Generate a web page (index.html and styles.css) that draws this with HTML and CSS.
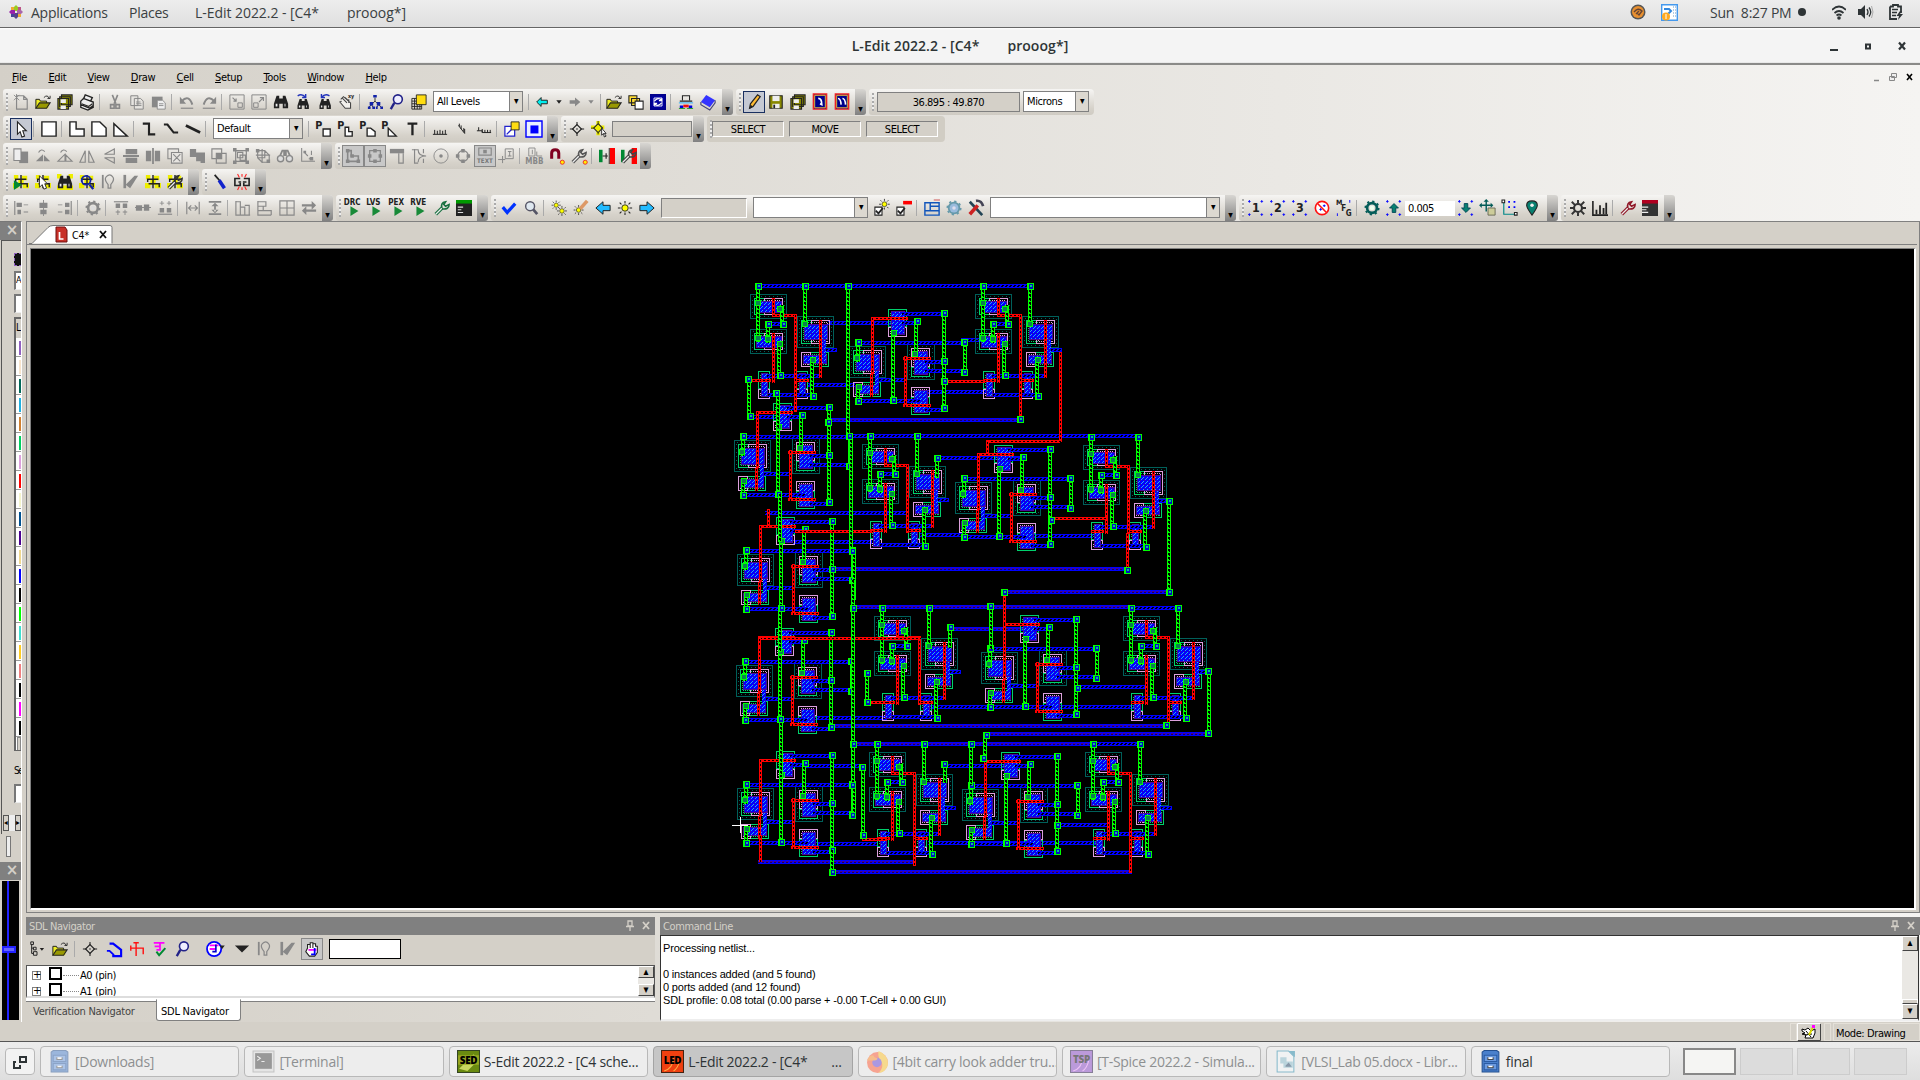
FILE: index.html
```html
<!DOCTYPE html>
<html lang="en">
<head>
<meta charset="utf-8">
<title>L-Edit 2022.2</title>
<link rel="stylesheet" href="styles.css">
</head>
<body>
<div class="desktop">
  <header class="panel-top">
    <svg class="distro" viewBox="0 0 14 14"><path d="M7 0l2 2v4H5V2z" fill="#9c2"/><path d="M14 7l-2 2H8V5h4z" fill="#a6a"/><path d="M7 14l-2-2V8h4v4z" fill="#548"/><path d="M0 7l2-2h4v4H2z" fill="#92a"/><path d="M2 2h3v3H2zM9 9h3v3H9z" fill="#ea3"/><path d="M9 2h3v3H9z" fill="#b58"/><path d="M2 9h3v3H2z" fill="#449"/></svg>
    <span class="apps">Applications</span><span class="places">Places</span><span class="current">L-Edit 2022.2 - [C4*<i></i>prooog*]</span>
    <div class="tray">
      <svg width="16" height="18" viewBox="0 0 16 18"><circle cx="8" cy="9" r="7.500" fill="#555"/><circle cx="8" cy="9" r="6" fill="#e89030"/><path d="M4 9q4-5 8-1l-3 4-2-2 2-2-3 3" fill="none" stroke="#643" stroke-width="1.400"/></svg>
      <svg class="doc" width="17" height="17" viewBox="0 0 17 17"><path d="M.7.700h15.600v15.600H.7z" fill="#fff" stroke="#49e" stroke-width="1.400"/><path d="M3 5h5l2 2-3 3" fill="none" stroke="#38d" stroke-width="2"/><path d="M12 3h3M12 6h3M12 9h3M12 12h3" stroke="#69c" stroke-dasharray="1 1"/><circle cx="5" cy="12.500" r="4" fill="#fa2"/><path d="M5 10v5" stroke="#fff"/></svg>
      <span class="clock">Sun&nbsp; 8:27 PM</span><b class="dot"></b>
      <svg class="wifi" width="14" height="15" viewBox="0 0 14 15"><path d="M0 5q7-7 14 0M2.500 8q4.500-4 9 0M4.500 10.500q2.500-2 5 0" fill="none" stroke="#2e3436" stroke-width="1.700"/><circle cx="7" cy="13" r="1.800" fill="#2e3436"/></svg>
      <svg class="vol" width="16" height="14" viewBox="0 0 16 14"><path d="M0 4h3l4-4v14l-4-4H0z" fill="#2e3436"/><path d="M9 4q2 3 0 6M11 2.500q3.500 4.500 0 9" fill="none" stroke="#2e3436" stroke-width="1.300"/><path d="M13.500 1q3 6 0 12" fill="none" stroke="#aaa"/></svg>
      <svg class="bat" width="15" height="16" viewBox="0 0 15 16"><path d="M1 2.500h3V1h5v1.500h3V9M1 2.500V15h7" fill="none" stroke="#2e3436" stroke-width="1.800"/><path d="M3 5.500h6M3 8.500h5M3 11.500h4" stroke="#2e3436" stroke-width="1.500"/><path d="M11 7L7.500 12H10l-1 4 5-6h-3l2-3z" fill="#2e3436"/></svg>
    </div>
  </header>
  <div class="titlebar"><b>L-Edit 2022.2 - [C4*<i></i>prooog*]</b>
    <svg viewBox="0 0 80 14" width="80" height="14"><path d="M0 10h8v2H0z" fill="#2e3436"/><path d="M36 5.500h4v4h-4z" fill="none" stroke="#2e3436" stroke-width="2"/><path d="M69 3.500l6 7M75 3.500l-6 7" stroke="#2e3436" stroke-width="2.200"/></svg>
  </div>
  <div class="chrome">
    <nav class="menu"><span><u>F</u>ile</span><span><u>E</u>dit</span><span><u>V</u>iew</span><span><u>D</u>raw</span><span><u>C</u>ell</span><span><u>S</u>etup</span><span><u>T</u>ools</span><span><u>W</u>indow</span><span><u>H</u>elp</span>
      <svg viewBox="0 0 42 10" width="42" height="10"><path d="M1 8.500h5" stroke="#888" stroke-width="1.500"/><path d="M18.500 1.500h5v4h-5zM16.500 4.500h5v4h-5z" fill="#eee" stroke="#888"/><path d="M34 2l5 6M39 2l-5 6" stroke="#000" stroke-width="1.600"/></svg>
    </nav>
    <div id="toolbars"></div>
  </div>
  <main class="work">
    <aside class="dock">
      <div class="dock-head">×</div>
      <div class="layers">
        <div class="mini-swatch"></div><div class="mini-field">A</div><div class="mini-field second"></div>
        <div class="layer-list"><div class="list-title">L</div><div id="swatches"></div><div class="list-scroll"></div></div>
        <div class="search-label">Se</div><div class="mini-field third"></div>
        <div class="hscroll"><b>◂</b><i></i><b>▸</b></div>
      </div>
      <div class="slider"><i></i></div>
      <div class="dock-head low">×</div>
      <div class="preview"><i></i><b></b></div>
    </aside>
    <div class="center">
      <section class="doc">
        <div class="tabs"><svg width="84" height="19" viewBox="0 0 84 19"><path d="M0 18.500h3L19 2.500q2-2 5-2h57q2 0 2 2v16" fill="#fff" stroke="#777"/><path d="M27 2h9l2 3v12H27z" fill="#c83028" stroke="#701010"/><path d="M30.500 7v7h4" fill="none" stroke="#fff" stroke-width="1.700"/><path d="M71 6l6 7M77 6l-6 7" stroke="#111" stroke-width="1.800"/><text x="43" y="14" font-size="10.500" font-family="DejaVu Sans Condensed,sans-serif">C4*</text></svg></div>
        <div class="canvas"><svg id="layout" width="1883" height="658" viewBox="31 249 1883 658" shape-rendering="crispEdges"></svg></div>
      </section>
      <div class="bottom">
        <section class="sdl">
          <div class="head"><span>SDL Navigator</span><svg class="hi" width="26" height="12" viewBox="0 0 26 12"><path d="M3 1h4v5H3zM1 6.500h8M5 7v4" fill="none" stroke="#d4d0c8" stroke-width="1.300"/><path d="M18 2l6 7M24 2l-6 7" stroke="#d4d0c8" stroke-width="1.800"/></svg></div>
          <div class="sdl-tools" id="sdltools"></div>
          <div class="tree"><div class="rows"><p><i>+</i><b></b><s></s>A0 (pin)</p><p><i>+</i><b></b><s></s>A1 (pin)</p></div><div class="vscroll short"><b>▴</b><i></i><b>▾</b></div></div>
          <div class="navtabs"><span>Verification Navigator</span><span class="on">SDL Navigator</span></div>
        </section>
        <section class="cmd">
          <div class="head"><span>Command Line</span><svg class="hi" width="26" height="12" viewBox="0 0 26 12"><path d="M3 1h4v5H3zM1 6.500h8M5 7v4" fill="none" stroke="#d4d0c8" stroke-width="1.300"/><path d="M18 2l6 7M24 2l-6 7" stroke="#d4d0c8" stroke-width="1.800"/></svg></div>
          <div class="log"><pre>Processing netlist...

0 instances added (and 5 found)
0 ports added (and 12 found)
SDL profile: 0.08 total (0.00 parse + -0.00 T-Cell + 0.00 GUI)</pre><div class="vscroll"><b>▴</b><i></i><em></em><b>▾</b></div></div>
        </section>
      </div>
    </div>
  </main>
  <div class="status"><span class="cell"></span><svg width="24" height="18" viewBox="0 0 24 18"><path d="M0 0h24v18H0z" fill="#d4d0c8"/><path d="M.5 17V.5H23" stroke="#fff" fill="none"/><path d="M1 17.500h22.500V1" stroke="#444" fill="none"/><path d="M5 6l3 1 3-2 3 3 4-2v4l-2 5H8l1-3-4-1 3-1-3-2z" fill="#fff" stroke="#000"/><path d="M9 8l5 6M8 12l7-1" stroke="#000"/><path d="M12 12l4-8" stroke="#dd0" stroke-width="2"/><path d="M15 2h3v3h-3z" fill="#f0f"/></svg><span class="cell two"></span><span class="mode">Mode: Drawing</span></div>
  <footer class="taskbar">
    <div class="showdesk"><svg width="14" height="14" viewBox="0 0 14 14"><path d="M7 2h6v5H7zM3 7H1v6h6v-3" fill="none" stroke="#2e3436" stroke-width="2"/></svg></div>
    <div class="task dim"><svg viewBox="0 0 22 22"><use href="#cab"/></svg>[Downloads]</div>
    <div class="task dim"><svg viewBox="0 0 22 22"><path d="M1 1h20v20H1z" fill="#ddd" stroke="#999"/><path d="M3 3h16v15H3z" fill="#444"/><path d="M5 6l3 2-3 2M9 11h3" fill="none" stroke="#eee"/></svg>[Terminal]</div>
    <div class="task"><svg viewBox="0 0 22 22"><path d="M0 0h22v22H0z" fill="#6a8a10"/><path d="M2 18L16 4l4 6-10 10z" fill="#c8d860"/><path d="M0 5h22v9H0z" fill="#9aa820"/><text x="11" y="13" text-anchor="middle" font-size="9.500" font-weight="900" font-family="Open Sans,sans-serif">SED</text><path d="M.5.500h21v21H.5z" fill="none" stroke="#342"/></svg>S-Edit 2022.2 - [C4 sche...</div>
    <div class="task on"><svg viewBox="0 0 22 22"><path d="M0 0h22v22H0z" fill="#f04010"/><path d="M3 20q8-2 9-12M12 20q4-2 6-10" stroke="#fa4" fill="none"/><text x="11" y="13" text-anchor="middle" font-size="9.500" font-weight="900" font-family="Open Sans,sans-serif">LED</text><path d="M.5.500h21v21H.5z" fill="none" stroke="#421"/></svg>L-Edit 2022.2 - [C4*<span class="dots">...</span></div>
    <div class="task dim"><svg viewBox="0 0 22 22"><circle cx="11" cy="12" r="10" fill="#ff5a36"/><path d="M12 1q10 4 9 13-2 7-9 8 6-6 2-12-3-3-2-9z" fill="#ffc52e"/><circle cx="10.500" cy="12" r="4.500" fill="#6845d8"/><path d="M1 10q2-5 6-5l1 2 3 1q0 2-3 2" fill="#ff8e2c"/></svg>[4bit carry look adder tru...</div>
    <div class="task dim"><svg viewBox="0 0 22 22"><path d="M0 0h22v22H0z" fill="#8a48c8"/><path d="M3 20q8-2 9-12M12 20q4-2 6-10" stroke="#e9f" fill="none"/><text x="11" y="12" text-anchor="middle" font-size="9.500" font-weight="900" font-family="Open Sans,sans-serif">TSP</text><path d="M.5.500h21v21H.5z" fill="none" stroke="#214"/></svg>[T-Spice 2022.2 - Simula...</div>
    <div class="task dim"><svg viewBox="0 0 22 22"><path d="M3 1h11l5 5v15H3z" fill="#f4f8fa" stroke="#28a"/><path d="M14 1h6v6z" fill="#28a"/><path d="M6 7h6v6H6zM9 11h9v6H9z" fill="#8bc"/><path d="M11 15l3-3 3 4h-6z" fill="#246"/></svg>[VLSI_Lab 05.docx - Libr...</div>
    <div class="task"><svg viewBox="0 0 22 22"><g id="cab"><path d="M3 2l2-1.500h12L19 2v19H3z" fill="#4a80cc" stroke="#245090"/><path d="M5 5h12v6H5zM5 13h12v6H5z" fill="#6a9ae0" stroke="#2c5ca4"/><path d="M8.500 7v2h5V7M8.500 15v2h5v-2" fill="#fff" stroke="#444"/></g></svg>final</div>
    <div class="pager"><i class="on"></i><i></i><i></i><i></i></div>
  </footer>
</div>
<script src="app.js"></script>
</body>
</html>
```
FILE: styles.css
```css
*, *::before, *::after { box-sizing: border-box; }
body { margin: 0; background: #d4d0c8; overflow: hidden; font: 11px "DejaVu Sans Condensed", "DejaVu Sans", sans-serif; color: #000; }
p, pre { margin: 0; }
.desktop { width: 1920px; height: 1080px; display: flex; flex-direction: column; }
.panel-top { height: 28px; display: flex; align-items: center; padding: 0 16px 3px 9px; background: linear-gradient(#ededed, #dfdfdf); border-bottom: 1px solid #666; font: 14px "Open Sans", "Noto Sans", sans-serif; color: #3a4042; white-space: nowrap; letter-spacing: -.25px; }
.distro { width: 14px; height: 14px; margin-right: 8px; }
.apps { width: 98px; } .places { width: 66px; }
.current { letter-spacing: -.05px; }
.current i, .titlebar i { display: inline-block; width: 28px; }
.tray { margin-left: auto; display: flex; align-items: center; }
.tray .doc { margin: 0 0 0 15px; height: 17px; }
.clock { width: 86px; margin-left: 32px; }
.dot { width: 8px; height: 8px; border-radius: 50%; background: #2e3436; margin-left: 2px; }
.wifi { margin-left: 26px; } .vol { margin-left: 12px; } .bat { margin-left: 15px; }
.titlebar { height: 37px; position: relative; display: flex; justify-content: center; align-items: center; background: linear-gradient(#fff, #f4f4f4 2px, #f4f4f4 34px, #ddd 35px); border-bottom: 2px solid #8a8a88; font: 600 14px "Open Sans", sans-serif; color: #2e3436; padding-bottom: 0; letter-spacing: .06px; }
.titlebar b { font-weight: 600; }
.titlebar svg { position: absolute; right: 10px; top: 11px; }
.chrome { height: 156px; background: linear-gradient(90deg, #d4d0c8, #f5f4f2); }
.menu { height: 24px; display: flex; align-items: center; padding: 0 5px 0 12px; letter-spacing: -.35px; }
.menu span { margin-right: 21.300px; }
.menu svg { margin-left: auto; }
.tb-row { display: flex; height: 26px; padding-left: 3px; }
.tb-row.tall { height: 27px; }
.tb { height: 26px; display: flex; align-items: center; flex: none; background: linear-gradient(#f6f5f3, #d6d2ca 75%, #cfcbc3); border-radius: 3px 4px 4px 3px; margin-right: 3px; padding: 0 0 1px 7px; position: relative; }
.tb.flat { background: #d1cdc4; }
.tb::before { content: ""; position: absolute; left: 3px; top: 4px; height: 18px; width: 2px; background: repeating-linear-gradient(#aaa 0 2px, #eee 2px 4px); }
.tb.cap::after { content: "▾"; position: absolute; right: 0; top: 0; width: 11px; height: 26px; padding-top: 15px; font-size: 10px; line-height: 10px; text-align: center; background: linear-gradient(#d8d6d2, #808080); border-radius: 0 3px 3px 0; }
.ic { width: 22px; height: 22px; flex: none; display: flex; align-items: center; justify-content: center; }
.ic.on { background: #c5c9d3; border: 1px solid #1a3060; }
.ic.on.grey { border-color: #888; background: #c8c8c8; }
.ic svg { width: 16px; height: 16px; overflow: visible; }
.sep { width: 6px; height: 16px; flex: none; border-left: 1px solid #aaa; margin-left: 1px; margin-right: -1px; }
.gap { flex: none; }
.field { height: 20px; flex: none; border: 1px solid #808080; border-right-color: #fff; border-bottom-color: #fff; background: #d4d0c8; text-align: center; line-height: 19px; letter-spacing: -.5px; }
.field.dark { border: 1px solid #808080; } .field.low { height: 16px; line-height: 15px; } .field.white { background: #fff; height: 15px; line-height: 15px; border: 0; text-align: left; padding-left: 3px; margin-top: 1px; }
.combo { height: 21px; flex: none; border: 1px solid #808080; background: #fff; display: flex; justify-content: space-between; line-height: 20px; padding-left: 3px; letter-spacing: -.4px; }
.combo b { width: 13px; background: #dcd8d0; border-left: 1px solid #808080; text-align: center; font-size: 10px; line-height: 18px; }
.work { display: flex; height: 801px; }
.dock { width: 22px; border-right: 1px solid #fff; border-top: 1px solid #777; overflow: hidden; flex: none; }
.dock-head { height: 18px; background: #808080; color: #d4d0c8; font: bold 15px/17px "DejaVu Sans", sans-serif; text-align: center; padding-left: 3px; }
.layers { height: 594px; border-left: 1px solid #555; border-top: 1px solid #555; margin-left: 1px; padding-left: 12px; overflow: hidden; }
.mini-swatch { height: 13px; width: 8px; margin-top: 12px; background: #111; border: 1px dashed #9060c0; }
.mini-field { height: 19px; margin-top: 5px; border: 2px solid #777; background: #fff; border-right: 0; border-bottom: 1px solid #eee; padding-left: 0; font-size: 9px; line-height: 15px; overflow: hidden; }
.mini-field.second { margin-top: 4px; }
.layer-list { margin-top: 4px; height: 434px; border: solid #666; border-width: 2px 0 1px 2px; background: #fff; overflow: hidden; }
.list-title { height: 19px; background: #d4d0c8; padding: 3px 0; font-size: 10px; }
.swatch { height: 19px; border-bottom: 1px solid #999; display: flex; justify-content: flex-end; padding-top: 3px; }
.swatch i { width: 2px; height: 14px; }
.list-scroll { height: 14px; background: #d4d0c8; border: 1px solid #888; margin-left: 1px; }
.search-label { margin-top: 14px; font-size: 10px; height: 13px; letter-spacing: -1.500px; }
.mini-field.third { margin-top: 6px; }
.hscroll { display: flex; height: 16px; margin: 12px 0 0 -11px; }
.hscroll b { width: 6px; background: #d4d0c8; border: 1px solid #555; font-size: 8px; line-height: 14px; }
.hscroll i { width: 6px; background: #eee; }
.slider { height: 28px; padding: 2px 0 0 6px; } .slider i { display: block; width: 5px; height: 21px; border: 1px solid #777; background: #eee; }
.preview { height: 139px; background: #000; margin: 1px 2px 0 2px; position: relative; }
.preview i { position: absolute; left: 5px; top: 0; width: 2px; height: 139px; background: #22f; }
.preview b { position: absolute; left: 0; top: 65px; width: 14px; height: 7px; background: #66f; border: 2px solid #22f; }
.center { flex: 1; display: flex; flex-direction: column; padding-left: 4px; background: linear-gradient(90deg, #d4d0c8, #f5f4f2); }
.center .doc { height: 692px; border: 1px solid #808080; background: #d4d0c8; }
.tabs { height: 23px; border-bottom: 1px solid #808080; padding: 3px 0 0 2px; margin-right: 2px; }
.tabs svg { display: block; }
.canvas { height: 662px; margin: 3px 3px 0 3px; border: 1px solid #808080; border-right: 2px solid #fff; border-bottom: 2px solid #fff; background: #000; overflow: hidden; }
.canvas svg { display: block; }
.bottom { display: flex; gap: 5px; margin-top: 4px; height: 105px; }
.sdl { width: 629px; display: flex; flex-direction: column; }
.cmd { flex: 1; }
.head { height: 18px; background: #808080; color: #d4d0c8; display: flex; justify-content: space-between; padding: 3px 3px 0; letter-spacing: -.4px; }
.hi { margin-right: 1px; }
.sdl-tools { height: 30px; background: #d4d0c8; display: flex; align-items: center; flex: none; padding-bottom: 2px; }
.sdl-tools .field.input { width: 72px; height: 20px; background: #fff; border: 1px solid #000; margin-left: 6px; }
.tree { height: 33px; background: #fff; border: 1px solid #555; border-bottom: 2px solid #ddd; display: flex; overflow: hidden; flex: none; }
.rows { flex: 1; padding: 1px 0 0 5px; }
.rows p { height: 16px; display: flex; align-items: center; letter-spacing: -.4px; }
.rows i { width: 9px; height: 9px; border: 1px solid #808080; font: 10px/6px "DejaVu Sans", sans-serif; margin-right: 8px; text-align: center; }
.rows b { width: 13px; height: 13px; border: 2px solid #000; margin-top: -3px; }
.rows s { width: 16px; border-top: 1px dotted #888; margin: 0 1px 0 1px; height: 0; }
.vscroll { width: 16px; display: flex; flex-direction: column; background: #eae8e4; }
.vscroll b { height: 15px; background: #d4d0c8; border: 1px solid #fff; border-right-color: #444; border-bottom-color: #444; font-size: 11px; line-height: 12px; text-align: center; }
.vscroll.short b { height: 12px; line-height: 9px; } .vscroll i { flex: 1; } .vscroll em { height: 5px; border: 1px solid #fff; border-bottom-color: #444; background: #d4d0c8; }
.navtabs { height: 24px; border-top: 3px solid #fff; display: flex; color: #444; letter-spacing: -.4px; box-shadow: inset 0 1px #808080; }
.navtabs span { padding: 4px 0 0 7px; width: 130px; white-space: nowrap; letter-spacing: -.25px; }
.navtabs .on { width: 85px; height: 22px; padding: 5px 0 0 4px; margin-top: -2px; background: #fff; color: #000; border: 1px solid #808080; border-top-color: #fff; border-radius: 0 0 3px 3px; }
.log { height: 86px; background: #fff; border: 1px solid #333; border-bottom: 2px solid #eee; display: flex; justify-content: space-between; margin-right: 1px; }
.log pre { font: 11px/13px "Liberation Sans", Arial, sans-serif; padding: 6px 0 0 2px; letter-spacing: -.17px; }
.status { height: 20px; background: #d4d0c8; display: flex; justify-content: flex-end; align-items: flex-end; border-bottom: 1px solid #555; }
.cell { width: 7px; height: 18px; border: 1px solid #e4e0d8; } .cell.two { margin-left: 3px; }
.mode { width: 87px; height: 18px; border: 1px solid #e4e0d8; margin-left: 2px; padding: 3px 2px; letter-spacing: -.4px; }
.taskbar { height: 38px; background: linear-gradient(#ececec, #dedede); display: flex; gap: 5px; padding: 4px 0 0 5px; font: 14px "Open Sans", "Noto Sans", sans-serif; color: #2e3436; }
.showdesk { width: 30px; height: 27px; margin-top: 2px; border: 1px solid #b8b8b8; border-radius: 4px; display: flex; align-items: center; justify-content: center; background: #f2f2f2; }
.task { width: 199.400px; height: 31px; border: 1px solid #b8b8b8; border-radius: 4px; background: #ededed; display: flex; align-items: center; padding-left: 7px; white-space: nowrap; overflow: hidden; letter-spacing: -.28px; }
.task svg { width: 23px; height: 23px; margin-right: 4px; flex: none; }
.task.dim { color: #8d9091; } .task.dim svg { opacity: .5; } .task.on { background: #c6c6c6; border-color: #a4a4a4; }
.dots { margin: 0 10px 0 auto; }
.pager { display: flex; gap: 4px; margin: 2px 0 0 8px; }
.pager i { width: 53px; height: 27px; border: 1px solid #ccc; background: #dcdcdc; }
.pager .on { border: 2px solid #888; background: #f5f5f3; }
```
FILE: app.js
```js
// ---------- icon library (18 x 18 grid) ----------
const G = '#888', K = '#222';
const s = (d, c = K, w = 1.3, f = 'none') => `<path d="${d}" fill="${f}" stroke="${c}" stroke-width="${w}"/>`;
const f = (d, c = K) => `<path d="${d}" fill="${c}"/>`;
const t = (x, y, str, size, c = K) => `<text x="${x}" y="${y}" font-size="${size}" font-weight="bold" font-family="DejaVu Sans Condensed,sans-serif" fill="${c}">${str}</text>`;
const bino = f('M4 2h3v3h4V2h3l3 9v5h-6v-5H7v5H1v-5z') + f('M3 11h2v3H3zM13 11h1v3h-1z', '#eee');
const run = f('M5 7l9 5.500-9 5.500z', '#188a38');
const corner4 = f('M1 0h1v3H1zM0 1h3v1H0zM15 0h1v3h-1zM14 1h3v1h-3zM1 15h1v3H1zM0 16h3v1H0zM15 15h1v3h-1zM14 16h3v1h-3z', '#00f');
const wrench = c => s('M2 16L9 9', c, 4) + s('M2 16L9 9', '#eee', 1.3) + s('M9 9Q7 3 13 2L11 5l2 2 4-2q0 6-8 5', c, 1.8);
const nodes = f('M1 1h5v5H1zM10 2h6v5h-6zM0 10h6v6H0zM11 10h7v6h-7zM6 6h6v6H6z', '#ee0') + s('M9 1v15M9 6H3v3M9 11h7v4M9 6h6M4 11h5', K, 1.6);
const sun = s('M9 1v3M9 14v3M1 9h3M14 9h3M3 3l2 2M13 13l2 2M3 15l2-2M13 5l2-2', K, 1.2) + '<circle cx="9" cy="9" r="3.600" fill="#ff0" stroke="#222"/>';
const bulb = s('M2 1v15', G, 2) + s('M8 12Q3 6 6 3q4-4 7 0 3 3-2 9v4H8z', G, 1.4);
const leaf = s('M2 1v15', G, 3) + f('M3 12L13 2h4l-9 14z', G);
const mag = (c, b = '#dfe8f0') => s('M11 10l5 6', c, 3) + `<circle cx="8" cy="7" r="5" fill="${b}" stroke="${c}" stroke-width="1.600"/>`;
const folder = f('M1 7h5l1 2h8v7H1z', '#ee2') + s('M1 16V6h4l1 2h7v2', K, 1.1, '#ee2') + s('M1 16l4-6h12l-4 6z', K, 1.2, '#990') + s('M10 4q4-4 6 1m-2 0h3V2', K, 1);
const gear = (c, inner) => `<circle cx="9" cy="9" r="5.500" fill="none" stroke="${c}" stroke-width="3"/><circle cx="9" cy="9" r="7.500" fill="none" stroke="${c}" stroke-width="2" stroke-dasharray="2.500 3.390"/><circle cx="9" cy="9" r="2.500" fill="${inner}"/>`;
const disk = s('M2 2h14v14H2z', K, 1.2, '#880') + f('M5 2h8v6H5z', '#eee') + f('M5 11h8v5H5z', '#eee') + f('M6 12h2v4H6z');
const disks = s('M5 1h12v11H5zM3 3h12v11H3zM1 5h12v12H1z', K, 1.2, '#880') + f('M4 6h6v4H4zM4 13h6v4H4z', '#eee');
const P = shape => t(-1, 9, 'P', 12) + s(shape, K, 1.5, '#fff');
const nodesBox = '<circle cx="9" cy="9" r="6" fill="none" stroke="#888" stroke-width="1.300"/>';
const I = {
  neu: s('M4 2h8l4 4v11H4zM12 2v4h4', G) + s('M1 1l6 6M7 1L1 7M4 0v8', G, 1),
  open: folder, disks, disk,
  print: s('M5 6l2-5 8 3-2 4M2 8l3-3 11 4v4l-4 3L2 12zM2 12v3l8 3 6-3v-3', K, 1.5, '#eee') + s('M3 11l8 3 4-3', K),
  cut: s('M6 1l4 10M12 1L8 11', G, 1.8) + s('M4 12h4v4H4zM10 12h4v4h-4z', G, 1.8),
  copy: s('M2 2h8v11H2zM6 5h7l3 3v9H6z', G, 1.1, '#e6e4e0') + s('M8 9h5M8 11h6M8 13h6', G, 1),
  paste: f('M1 3h12v12H1z', G) + s('M7 7h6l3 3v7H7z', G, 1, '#eee') + s('M9 11h5M9 13h5', G, 1),
  undo: s('M3 8q8-8 12 4', G, 2.2) + f('M1 3v8h7z', G) + s('M2 16h14', G),
  redo: s('M15 8Q7 0 3 12', G, 2.2) + f('M17 3v8h-7z', G) + s('M2 16h14', G),
  shrink: s('M1 1h16v16H1zM10 10h5v5h-5z', G, 1.1) + s('M4 4l4 4M8 5v3H5', G),
  grow: s('M1 1h16v16H1zM3 10h5v5H3z', G, 1.1) + s('M9 9l5-5M10 4h4v4', G),
  bino, binoR: '<g transform="translate(2 4) scale(.8)">' + bino + '</g>' + s('M3 2q5-3 9 2M12 0v4H8', '#23b', 1.6),
  binoL: '<g transform="translate(2 4) scale(.8)">' + bino + '</g>' + s('M14 2q-5-3-9 2M5 0v4h4', '#23b', 1.6),
  hand: s('M2 6l3-3 8 7v6H7L1 9l2-1M4 5l5 5M7 4l4 4M11 6v4', '#444', 1.2, '#f2f0ec') + t(10, 5, 'xy', 6),
  tree: s('M9 4v4M9 8L5 12M9 8l4 4M5 12l-3 3M5 12l2 3M13 12l-2 3M13 12l3 3', K, 1) + f('M7 1h4v3H7zM3 9h4v4H3zM11 9h4v4h-4zM1 14h3v3H1zM6 14h3v3H6zM10 14h2v3h-2zM15 14h3v3h-3z', '#12a'),
  zoom: s('M6 10l-4 7', '#228', 2.6) + '<circle cx="10" cy="6" r="5" fill="#eef" stroke="#228" stroke-width="1.800"/>',
  layers: s('M1 5h11v12H1zM1 8h11M1 11h11M1 14h11M4 5v12M7 5v12M10 5v12', K, 1) + s('M6 1h11v11H6z', K, 1, '#fd1'),
  back: s('M3 9l5-5v3h7v4H8v3z', K, 1.1, '#0ee'), fwd: f('M15 9l-6-5v3H3v4h6v3z', G),
  dd: f('M6 7h6l-3 4z'), ddg: f('M6 7h6l-3 4z', G),
  copy2: s('M1 2h9v8H1zM4 5h9v8H4z', K, 1.2, '#fd3') + s('M8 8h9v9H8z', K, 1.2, '#fff'),
  refresh: s('M1 1h16v16H1z', '#00008a', 2, '#0000a0') + s('M4.500 4.500h9v9h-9z', '#fff', 1) + s('M5 8q4-5 8-1M13 5v2.500h-3M13 10q-4 5-8 1M5 13v-2.500h3', '#fff', 1.3),
  cross: s('M5 7V2h8v5M2 8h14', K, 1.2) + s('M1 10h16', '#1af', 1, 'none') + f('M2 13h4v3H2zM12 13h4v3h-4z', '#00d') + f('M6 12h6v3H6z', '#e11') + f('M1 16h7v1H1zM10 16h7v1h-7z', '#090'),
  book: f('M7 1l10 6-6 8L1 9z', '#33f') + s('M1 9v3l10 6 6-8V7', '#447', 1.3),
  pencil: s('M4 16l1-5 8-10 3 2-8 11z', K, 1.3, '#fb3') + f('M4 17l1-5 3 2z'),
  one: s('M1.500 0h15v17h-15z', '#e22', 1.5, '#00008a') + s('M3 1.500h12v14H3z', '#fc3', 1) + s('M7 5q4 0 4 7l-2-1', '#fff', 2), two: s('M1.500 0h15v17h-15z', '#e22', 1.5, '#00008a') + s('M3 1.500h12v14H3z', '#fc3', 1) + s('M4.500 5q3 0 3.500 7M9.500 5q3 0 3.500 7', '#fff', 1.8),
  arrow: s('M5 1v14l3-3 2 6 3-1-2-6h4z', K, 1.2, '#fff'),
  box: s('M1 1h16v16H1z', K, 1.6, '#fff'), ell: s('M1 1h7v8h9v8H1z', K, 1.6, '#fff'), pent: s('M1 1h9l7 7v9H1z', K, 1.6, '#fff'), tri: s('M1 17V3l15 14z', K, 1.6, '#fff'),
  w1: s('M2 3h7v12h7', K, 2.4), w2: s('M1 4h4l7 9h5', K, 2.4), w3: s('M1 5l16 8', K, 3),
  p1: P('M8 9h8v8H8z'), p2: P('M8 7h4v5h4v5H8z'), p3: P('M8 8h4l5 4v5H8z'), p4: P('M7 17V8l9 9z'), T: s('M4 3h11M9.500 3v13', K, 2.6),
  r1: s('M1 15h16M3 15v-5M6 15v-4M9 15v-5M12 15v-4M15 15v-5', K, 1.1), r2: s('M5 5l7 9M6 6V3M8 9V5M11 12V8M12 14V9', K, 1.1), r3: s('M1 11h6v2h10M3 11V7M7 13V9M10 13v-3M13 13v-3M16 13v-3', K, 1.1),
  edit: s('M1 6h11v11H1z', '#22c', 1.4, '#fff') + s('M3 15l9-9', '#22c', 1.4) + s('M8 1h9v9H8z', K, 1, '#fd1'), blue: s('M0 0h18v18H0z', '#00f', 1.6, '#eaf0ff') + f('M5 5h9v9H5z', '#00f'),
  snap: s('M9 1v4M9 13v4M1 9h4M13 9h4', K, 1.2) + s('M9 4l5 5-5 5-5-5z', K, 1.3) + '<circle cx="9" cy="9" r="1" fill="#666"/>', snapY: s('M8 0v16M0 7h15', '#ee0', 4) + s('M8 3l5 5-5 5-5-5z', K, 1.2, '#ee0') + s('M8 0v3M8 13v2M0 8h3', K, 1) + s('M12 8v8l2-2 1 4 2-1-2-3h2z', K, 1, '#fff'),
  a1: f('M7 4h10v13H7z', G) + s('M1 1h8v13H1z', G, 1.2, '#eee'), a2: f('M1 15h8V7zM10 15h7l-7-7z', G) + s('M4 5q3-5 7-1', G), a3: s('M1 15h8V7zM10 15h7l-7-7z', G, 1.2) + s('M4 5q3-5 7-1', G), a4: s('M1 16h6V3zM17 16h-6V3z', G), a5: s('M15 1v6H4zM15 17v-6H4z', G),
  a6: f('M3 1h13v6H3zM3 11h13v6H3zM0 8h18v2H0z', G), a7: f('M1 3h6v12H1zM11 3h6v12h-6zM8 0h2v18H8z', G), a8: s('M1 1h12v11H1z', G, 1.2) + s('M5 5h12v12H5zM7 7l8 8M15 7l-8 8', G, 1.2, '#e6e4e0'), a9: f('M1 1h7v4h6v10H8v-5H1zM13 5h5v12h-5z', G), a10: s('M1 1h11v11H1zM6 6h11v11H6z', G) + f('M6 6h6v6H6z', G), a11: s('M3 3h12v12H3zM5 5h6v6H5zM8 8h6v6H8z', G) + f('M0 0h4v4H0zM14 0h4v4h-4zM0 14h4v4H0zM14 14h4v4h-4z', G), a12: s('M3 3h8v8H3zM8 8h8v8H8zM3 11l5 5M11 3l5 5M8 1v16M1 8h16', G) + f('M1 1h4v4H1zM13 13h4v4h-4z', G), a13: s('M2 12L6 3h2v6M16 12L12 3h-2v6', G, 2) + '<circle cx="4" cy="12" r="3.500" fill="#ddd" stroke="#888" stroke-width="1.500"/><circle cx="14" cy="12" r="3.500" fill="#ddd" stroke="#888" stroke-width="1.500"/>', a14: s('M3 0v15h15M6 5l4 4M14 3v5M11 12h4', G, 1.2) + f('M5 3h3v3H5zM12 10h4v4h-4z', G),
  b1: s('M3 3h4v6h8v6H3z', G, 1.8) + f('M1 1h4v4H1zM6 7h4v4H6zM13 13h4v4h-4zM1 13h4v4H1z', G), b2: s('M3 3h12v12H3z', G, 1.4) + f('M7 1h4v4H7zM7 13h4v4H7zM1 7h4v4H1zM13 7h4v4h-4z', G), b3: f('M1 1h16v5H1z', G) + s('M11 6v11h5V6', G), b4: s('M4 1v16h4M1 2h7q0 7 9 7-9 0-9 7M14 1v5M14 12v5', G, 1.3), b5: '<circle cx="9" cy="9" r="8" fill="none" stroke="#888"/><circle cx="9" cy="9" r="2" fill="#888"/>', b6: nodesBox + f('M7 1h4v4H7zM7 13h4v4H7zM1 7h4v4H1zM13 7h4v4h-4z', G), b7: s('M2 0h14v8H2z', G) + f('M7 2h4v4H7z', G) + t(0, 17, 'TEXT', 7, '#777'), b8: s('M7 1h9v11H7zM4 9v8M-1 13h8M10 4h4M12 4v5M10 9h4', G, 1.1), b9: s('M2 0h7v9H2zM6 2v5M11 4v5h6', G, 1) + t(-2, 18, 'MBB', 9, G),
  mag1: s('M3 12V6q0-4 4-4t4 4v6', '#800020', 3.4) + '<circle cx="15" cy="16" r="2.300" fill="#fe0" stroke="#e22"/>', wr: wrench('#555') + '<circle cx="16" cy="16" r="2.300" fill="#fe0" stroke="#e22"/>',
  red1: f('M0 2h4v14H0z', '#083') + s('M4 9h6M8 6v6', K, 1.3) + f('M12 0h6v18h-6z', '#f00') + s('M11.500 0v18', K, 1), red2: f('M0 2h4v14H0z', '#083') + f('M12 0h6v18h-6z', '#f00') + wrench('#444'),
  n1: nodes + f('M1 7l9 5-9 6z', '#083'), n2: nodes + s('M5 2v13l3-3 2 5 3-1-2-5h3z', K, 1, '#fff'), n3: f('M0 0h5v5H0zM13 0h5v5h-5zM0 13h18v5H0z', '#ee0') + bino, n4: nodes + '<circle cx="8" cy="7" r="5" fill="none" stroke="#12a" stroke-width="2"/>' + s('M12 12l4 5', '#12a', 2.6), bulb, leaf, n5: nodes, n6: nodes + wrench('#333'),
  pen: s('M3 1l7 8', K, 2) + s('M8 7l6 9', '#12c', 4), link: s('M7 5H1v8h6v-3M11 5h6v8h-6v-3M5 9h3M10 9h4', K, 1.8) + s('M4 0l2 4M9 0v3M14 0l-2 4M4 18l2-4M9 18v-3M14 18l-2-4', '#f22', 1.2),
  l1: s('M2 1v16', G) + f('M4 3h6v5H4zM5 11h4v5H5zM12 5h5v1h-5zM12 13h5v1h-5z', G), l2: f('M5 3h9v6H5zM9 0h1v18H9zM6 11h7v5H6z', G), l3: s('M16 1v16', G) + f('M9 3h5v5H9zM9 11h5v5H9zM1 5h5v1H1zM1 13h5v1H1z', G), gg: gear(G, '#ddd'),
  l4: s('M1 2h16', G) + f('M3 4h5v5H3zM11 4h5v5h-5zM5 11h1v6H5zM3 13h5v1H3zM13 11h1v6h-1zM11 13h5v1h-5z', G), l5: f('M1 6h7v6H1zM10 5h6v7h-6zM0 8h18v1H0z', G), l6: s('M1 16h16', G) + f('M3 9h5v5H3zM11 9h5v5h-5zM5 1h1v5H5zM13 1h1v5h-1zM3 3h5v1H3zM11 3h5v1h-5z', G), l7: s('M2 2v14M16 2v14M4 9h10M7 6L4 9l3 3M11 6l3 3-3 3', G), l8: s('M2 2h14M2 16h14', G, 2) + f('M9 3l4 4H5zM9 15l4-4H5zM8 5h2v8H8z', G),
  l9: s('M1 1v16h16M1 2h5v15M6 8h5v9M11 6h5v11', G), l10: s('M1 1v16h15M1 2h9v5H1M1 7h6v5H1M1 12h15v5', G), l11: s('M1 1h16v16H1zM9 1v16M1 9h16', G), l12: s('M1 6h14M17 12H3', G, 2.6) + f('M12 1l5 5-5 5zM6 7l-5 5 5 5z', G),
  DRC: t(-2.500, 6, 'DRC', 9) + run, LVS: t(-2, 6, 'LVS', 9) + run, PEX: t(-2, 6, 'PEX', 9) + run, RVE: t(-2, 6, 'RVE', 9) + run, gwr: wrench('#197040'), panel: f('M0 0h18v18H0z') + f('M0 0h18v4H0z', '#090') + s('M2 8h6M2 11h4M2 14h6', '#ddd', 1.2),
  check: s('M2 8l5 6 9-10', '#03f', 3.6), mag: mag('#556'), sun2: '<g transform="scale(.65)">' + sun + '</g><g transform="translate(6 6) scale(.7)">' + sun + '</g>', brush: '<g transform="translate(0 5) scale(.7)">' + sun + '</g>' + s('M8 10l8-9', '#d96', 4), la: s('M1 9l8-7v4h8v6H9v4z', K, 1.1, '#2bf'), ra: s('M17 9L9 2v4H1v6h8v4z', K, 1.1, '#2bf'), sun,
  cs: '<g transform="translate(5 -2) scale(.75)">' + sun + '</g>' + s('M1 8h8v9H1z', K, 1.2, '#fff') + s('M2 12l3 3 5-6', K, 2), cr: f('M8 1h10v4H8z', '#f00') + s('M1 8h8v9H1z', K, 1.2, '#fff') + s('M2 12l3 3 5-6', K, 2), plan: s('M1 3h16v14H1zM1 12h16M7 3v9M7 7h10', '#15b', 1.6) + s('M11 0h7', '#c44', 1), cog: gear('#69a', '#cde') + '<circle cx="9" cy="9" r="5" fill="#9bd"/><circle cx="9" cy="9" r="2" fill="#dde"/>', tools: s('M2 2l14 15', '#245', 3) + s('M11 6L2 16', '#c22', 4) + s('M9 1q6-1 8 6', '#445', 3),
  g1: corner4 + t(4.500, 14, '1', 14), g2: corner4 + t(4.500, 14, '2', 14), g3: corner4 + t(4.500, 14, '3', 14), no: '<circle cx="9" cy="9" r="7.500" fill="#fff" stroke="#f11" stroke-width="1.800"/>' + s('M4 4l10 10', '#f11', 1.800) + f('M6 10h3v1H6zM7 9h1v3H7zM10 6h3v1h-3zM11 5h1v3h-1z', '#00f'), mfg: t(0, 6, 'M', 8) + t(6, 12, 'F', 9) + t(11, 18, 'G', 9) + f('M1 15h1v3H1zM15 0h1v3h-1z', '#00f'),
  tg: gear('#045c58', '#efe'), up: corner4 + s('M9 4l5 5h-3v5H7V9H4z', '#045', 1, '#088070'), dn: corner4 + s('M9 14l5-5h-3V4H7v5H4z', '#045', 1, '#088070'), mv: s('M7 0v13M1 6h12', '#045c58', 1.600) + f('M7-1l3 3H4zM-1 6l3-3v6zM15 6l-3-3v6z', '#045c58') + s('M9 9h8v8H9z', '#665', 1, '#cc9'), dots: s('M2 2v14h14', '#088', 1.300) + s('M0 0h3v3H0zM14 14h3v3h-3z', K, 1.200, '#fff') + s('M7 2h2M13 2h2M7 8h2M13 8h2', '#00f', 2), pin: s('M9 17Q3 9 3 6q0-5 6-5t6 5q0 3-6 11z', K, 1.200, '#088070') + '<circle cx="9" cy="6" r="2" fill="#eee"/>',
  bg: '<circle cx="9" cy="9" r="4.500" fill="none" stroke="#333" stroke-width="2.400"/>' + s('M9 0v4M9 14v4M0 9h4M14 9h4M2 2l4 4M12 12l4 4M16 2l-4 4M2 16l4-4', '#333', 2.2), chart: s('M1 1v16h17', K, 1.800) + f('M4 11h2v5H4zM8 6h2v10H8zM12 9h2v7h-2zM15 3h2v13h-2z'), rw: wrench('#901828'), panelR: f('M0 0h18v18H0z', '#333') + f('M0 0h18v4H0z', '#b00020') + s('M0 8h7M0 11h5M0 14h7', '#eee', 1.300),
  hier: s('M2 1h3v3H2zM5 12h4v4H5zM5 7h3v3H5zM3 4v10h2M3 8h2', K, 1.1) + f('M12 8h5l-2.500 3z'), bl: s('M4 3h4l9 7v7H7', '#00f', 2.4) + s('M1 11h3l5 5', '#00f', 2), rt: s('M8 1v16M2 8h14v7M2 5v6M5 2h6', '#f11', 1.600), ck: s('M2 2h12M9 2v8H5M3 6h6', '#f0f', 2) + s('M5 12l3 4 7-8', '#083', 2.2), note: '<circle cx="8" cy="9" r="8" fill="#fff" stroke="#00f" stroke-width="2"/>' + s('M3 5h10M3 9h7', '#f0f', 2) + s('M10 4v8H6', '#00c', 1.8) + f('M14 5h6l-3 4z'), bigdd: f('M1 5h16l-8 8z'), hand2: s('M4 8V4h3V2h3v1h3v3h2v7l-3 4H6L2 12l2-4zM7 4v4M10 3v5', K, 1.200, '#fff') + s('M5 10h9', '#f0f', 2) + s('M12 8v7H8', '#00f', 2)
};
const icon = (n, cls = '') => `<div class="ic ${cls}"><svg viewBox="0 0 18 18">${I[n]}</svg></div>`;

// "name" icon, "name!" pressed, "name~" pressed grey, "|" separator,
// [offset] gap, ['f', width, text, class] field, ['c', width, text] drop-down
const part = p => {
  if (p === '|') return '<div class="sep"></div>';
  if (typeof p === 'string') {
    if (p.endsWith('!')) return icon(p.slice(0, -1), 'on');
    if (p.endsWith('~')) return icon(p.slice(0, -1), 'on grey');
    return icon(p);
  }
  if (p[0] === 'f') return `<div class="field ${p[3] || ''}" style="width:${p[1]}px">${p[2]}</div>`;
  if (p[0] === 'c') return `<div class="combo" style="width:${p[1]}px"><span>${p[2]}</span><b>▾</b></div>`;
  return `<div class="gap" style="margin-left:${p[0]}px"></div>`;
};
const w = str => str.split(' ');
const rows = [
  [[730, 'cap', [...w('neu open disks print | cut copy paste | undo redo | shrink grow bino binoR binoL hand | tree zoom layers'), [3], ['c', 90, 'All Levels'], [4], '|', [-2], 'back', [-5], 'dd', [-6], 'fwd', [-6], 'ddg', [-3], '|', [-2], ...w('open copy2 refresh | cross book')]],
   [130, 'cap', w('pencil! disk disks one two')],
   [225, '', [[1], ['f', 143, '36.895 : 49.870', 'dark'], [3], ['c', 66, 'Microns']]]],
  [[555, 'cap', [...w('arrow! | box | ell pent tri | w1 w2 w3 |'), [3], ['c', 90, 'Default'], [4], '|', ...w('p1 p2 p3 p4 T | r1 r2 r3 | edit blue')]],
   [143, 'cap', [[-2], 'snap', 'snapY', [2], ['f', 80, '', 'dark low']]],
   [238, 'flat', [[-2], ['f', 72, 'SELECT', 'low'], [5], ['f', 72, 'MOVE', 'low'], [5], ['f', 72, 'SELECT', 'low']]]],
  [[329, 'cap', w('a1 a2 a3 a4 a5 a6 a7 a8 a9 a10 a11 a12 a13 a14')],
   [316, 'cap', w('b1~ b2~ b3 b4 b5 b6 b7~ b8 | b9 mag1 wr | red1 red2')]],
  [[196, 'cap', w('n1 n2 n3 n4 bulb leaf n5 n6')], [64, 'cap', w('pen link')]],
  [[330, 'cap', w('l1 l2 l3 | gg | l4 l5 l6 | l7 l8 | l9 l10 l11 l12')],
   [152, 'cap', w('DRC LVS PEX RVE gwr panel')],
   [745, 'cap', [...w('check mag | sun2 brush la sun ra'), [3], ['f', 86, ''], [6], ['c', 115, ''], [3], ...w('cs cr | plan cog tools'), [3], ['c', 230, '']]],
   [319, 'cap', [[-1], ...w('g1 g2 g3 no mfg | tg up'), ['f', 50, '0.005', 'white'], ...w('dn mv dots pin')]],
   [114, 'cap', [[-1], ...w('bg chart | rw panelR')]]]
];
document.getElementById('toolbars').innerHTML = rows.map((r, i) =>
  `<div class="tb-row ${i < 2 ? 'tall' : ''}">` + r.map(([width, cls, items]) =>
    `<div class="tb ${cls}" style="width:${width}px">${items.map(part).join('')}</div>`).join('') + '</div>').join('');
document.getElementById('sdltools').innerHTML = ['hier', [1], 'open', [2], '|', 'snap', [2], 'bl', [1], 'rt', [1], 'ck', [1], 'zoom', [10], 'note', [5], 'bigdd', [1], 'bulb', [1], 'leaf', [2], 'hand2~', ['f', 72, '', 'input']].map(part).join('');
document.getElementById('swatches').innerHTML = '#9060c0 #f8e4cc #006858 #20b0e0 #d08030 #00d060 #dda0dd #f00 #f4f4cc #005090 #4a0090 #f0d890 #00f #000 #0f0 #40e0d0 #fc2 #f08080 #000 #f0f #000'.split(' ').map(c => `<div class="swatch"><i style="background:${c}"></i></div>`).join('');

// ---------- chip layout ----------
// Geometry is listed on a third-of-a-pixel grid; q() snaps it to whole pixels.
const q = v => Math.round(v / 3);
const rect = (x, y, wd, h, a) => `<rect x="${x}" y="${y}" width="${wd}" height="${h}" ${a}/>`;
const dash = (d, c, pat, off = 0, sw = 1) => `<path d="${d}" stroke="${c}" stroke-width="${sw}" stroke-dasharray="${pat}" stroke-dashoffset="${off}" fill="none"/>`;
const draw = (ox, oy, list) => {
  const z = { o: '', b: '', r: '', g: '', v: '' };
  for (const [k, a, b, c, d] of list) {
    const X = q(a - ox), Y = q(b - oy);
    if (k === 'well' || k === 'act' || k === 'imp') {
      const W = q(c - ox) - X, H = q(d - oy) - Y, col = { well: '#00605a', act: '#00d06c', imp: '#dda0dd' }[k];
      z.o += rect(X + .5, Y + .5, W - 1, H - 1, `fill="none" stroke="${col}"`) + `<rect x="${X + 2.5}" y="${Y + 2.5}" width="${W - 5}" height="${H - 5}" fill="none" stroke="${col}" stroke-dasharray="1 ${k === 'well' ? 3 : 1}"/>`;
    } else if (k === 'dev') {
      z.o += rect(X + .5, Y + .5, q(c - ox) - X - 1, q(d - oy) - Y - 1, 'fill="url(#metal)" stroke="#4a0a9a"');
    } else if (k === 'bh' || k === 'ph') {          // a..b along x, c = centre y
      const x1 = q(a - ox), x2 = q(b - ox), y = q(c - oy) - 2;
      z.b += rect(x1, y, x2 - x1, 4, 'fill="#00f"') + (k === 'bh'
        ? dash(`M${x1} ${y + 1.5}H${x2}`, '#000', '2 2') + dash(`M${x1} ${y + 2.5}H${x2}`, '#000', '2 2', 1)
        : dash(`M${x1} ${y + 1.5}H${x2}`, '#4a0090', '3 1') + dash(`M${x1} ${y + 2.5}H${x2}`, '#200050', '2 2'));
    } else if (k === 'bv') {
      z.b += rect(q(a - ox) - 2, q(b - oy), 4, q(c - oy) - q(b - oy), 'fill="url(#metal)"');
    } else if (k === 'rh') {
      const x1 = q(a - ox), x2 = q(b - ox), y = q(c - oy) - 1;
      z.r += rect(x1, y, x2 - x1, 3, 'fill="#f00"') + dash(`M${x1} ${y + 1.5}H${x2}`, '#000', '2 2', 3);
    } else if (k === 'rv') {                        // a = centre x, b..c along y
      const y1 = q(b - oy), y2 = q(c - oy), x = q(a - ox) - 1;
      z.r += rect(x, y1, 3, y2 - y1, 'fill="#f00"') + dash(`M${x + 1.5} ${y1}V${y2}`, '#000', '2 2', 3);
    } else if (k === 'gv') {
      const y1 = q(b - oy), y2 = q(c - oy), x = q(a - ox) - 2;
      z.g += rect(x, y1, 4, y2 - y1, 'fill="#0f0"') + dash(`M${x + 2} ${y1}V${y2}`, '#000', '3 1', 0, 2) + dash(`M${x + 1.5} ${y1}V${y2}`, '#0f0', '1 3', 2);
    } else if (k === 'via') {
      z.v += rect(X - 3 + .5, Y - 3 + .5, 6, 6, 'fill="#0010c0" stroke="#0f0"') + rect(X - 2, Y - 2, 1, 5, 'fill="#0f0"') + rect(X, Y - 1, 2, 2, 'fill="#0c8"');
    } else if (k === 'con') {
      z.v += rect(X + .5, Y + .5, 5, 5, 'fill="#0a8050" stroke="#0f0"');
    }
  }
  return z.o + z.b + z.r + z.g + z.v;
};
const sumGate = [
  ['well', 90, 72, 200, 146], ['well', 90, 177, 200, 251], ['well', 231, 138, 341, 233],
  ['act', 102, 84, 190, 134], ['imp', 132, 84, 190, 134], ['dev', 108, 93, 186, 129], ['act', 102, 189, 190, 239], ['imp', 132, 189, 190, 239], ['dev', 108, 198, 186, 234],
  ['act', 243, 150, 330, 221], ['imp', 273, 150, 330, 221], ['dev', 252, 162, 324, 210], ['act', 243, 246, 326, 290], ['imp', 243, 246, 273, 290], ['dev', 250, 255, 320, 282],
  ['act', 115, 303, 149, 357], ['imp', 115, 357, 149, 386], ['dev', 123, 309, 144, 381], ['act', 229, 303, 263, 357], ['imp', 229, 357, 263, 386], ['dev', 237, 309, 258, 381],
  ['bh', 145, 190, 163], ['bh', 140, 305, 319], ['bh', 144, 282, 375], ['bh', 306, 351, 239], ['bv', 313, 210, 272],
  ['rv', 160, 84, 140], ['rv', 160, 189, 338], ['rh', 156, 231, 136], ['rv', 224, 132, 338], ['rv', 301, 150, 246], ['rv', 299, 246, 325], ['rh', 115, 152, 331], ['rh', 229, 267, 331],
  ['gv', 115, 48, 215], ['gv', 256, 48, 165], ['gv', 143, 163, 220], ['gv', 186, 105, 163], ['gv', 177, 218, 316], ['gv', 276, 265, 379],
  ['con', 105, 91], ['con', 105, 195], ['con', 171, 108], ['con', 171, 213], ['con', 135, 198], ['con', 246, 153], ['con', 270, 261],
  ['via', 115, 48], ['via', 256, 48], ['via', 145, 163], ['via', 190, 163], ['via', 181, 316], ['via', 280, 379]];
const carryGate = [
  ['act', 504, 117, 560, 172], ['imp', 504, 172, 560, 200], ['dev', 513, 123, 555, 195], ['well', 387, 228, 497, 323], ['act', 399, 240, 486, 311], ['imp', 429, 240, 486, 311], ['dev', 408, 252, 480, 303],
  ['well', 562, 222, 644, 331], ['imp', 574, 234, 629, 290], ['act', 574, 290, 629, 320], ['dev', 583, 243, 624, 314], ['act', 400, 336, 482, 380], ['imp', 400, 336, 428, 380], ['dev', 405, 345, 478, 372],
  ['imp', 574, 351, 629, 380], ['act', 574, 380, 629, 434], ['dev', 583, 360, 624, 429],
  ['bh', 545, 673, 131], ['bh', 545, 592, 159], ['bh', 415, 733, 218], ['bh', 615, 673, 275], ['bh', 615, 733, 304], ['bh', 465, 562, 330], ['bh', 415, 600, 393], ['bh', 615, 673, 419], ['bv', 471, 303, 360],
  ['rh', 453, 564, 145], ['rv', 457, 141, 312], ['rv', 454, 312, 380], ['rh', 549, 633, 264], ['rh', 549, 633, 406], ['rv', 555, 259, 410],
  ['gv', 415, 218, 275], ['gv', 415, 345, 393], ['gv', 519, 190, 391], ['gv', 588, 154, 262], ['gv', 672, 130, 415], ['gv', 734, 218, 307],
  ['con', 402, 255], ['con', 408, 342], ['con', 513, 180], ['con', 576, 243],
  ['via', 415, 217], ['via', 415, 393], ['via', 520, 391], ['via', 592, 154], ['via', 673, 130], ['via', 673, 274], ['via', 673, 415], ['via', 733, 217], ['via', 733, 307]];
const use = (id, pts) => pts.map(([x, y]) => `<use href="#${id}" x="${x}" y="${y}"/>`).join('');
const at = (x, y, list) => `<g transform="translate(${x} ${y})">${draw(0, 0, list)}</g>`;
document.getElementById('layout').innerHTML =
  `<defs><pattern id="metal" width="4" height="4" patternUnits="userSpaceOnUse"><path d="M0 0h4v4H0z" fill="#00f"/><path d="M0 0h1v1H0zM2 2h1v1H2zM3 1h1v1H3z" fill="#2aa8e8"/><path d="M1 3h1v1H1z" fill="#4a0a9a"/></pattern>
  <g id="sum">${draw(90, 72, sumGate)}</g><g id="carry">${draw(387, 228, carryGate)}</g></defs>` +
  at(720, 270, [['bh', 115, 931, 48], ['bh', 325, 592, 159], ['bh', 723, 790, 211], ['bh', 620, 800, 365], ['bh', 262, 405, 346], ['ph', 325, 901, 450], ['bh', 91, 245, 441], ['bh', 388, 1257, 497], ['bh', 135, 565, 729], ['bh', 220, 455, 816], ['bh', 600, 733, 796], ['bh', 650, 910, 563],
    ['ph', 337, 1222, 897], ['bh', 940, 1120, 797], ['ph', 853, 1348, 967]]) +
  at(720, 580, [['ph', 400, 1235, 82], ['bh', 1235, 1377, 85], ['ph', 691, 988, 147], ['bh', 275, 500, 413], ['bh', 620, 1250, 381], ['ph', 335, 1340, 438], ['ph', 400, 1120, 492], ['bh', 1120, 1260, 492], ['bh', 255, 425, 557], ['bh', 675, 925, 557], ['bh', 240, 475, 791], ['bh', 625, 1130, 790], ['ph', 115, 587, 845], ['ph', 337, 1235, 876]]) +
  at(960, 640, [['bh', 355, 560, 141], ['bh', 295, 445, 555], ['bh', 705, 745, 94], ['ph', 80, 745, 283]]) +
  use('sum', [[750, 294], [975, 294], [862, 444], [1083, 445], [874, 616], [1123, 616], [869, 752], [1085, 752]]) +
  use('carry', [[849, 346], [734, 440], [737, 554], [736, 665], [737, 788], [955, 482], [981, 652], [962, 789]]) +
  at(720, 270, [['gv', 384, 48, 499], ['gv', 393, 499, 842], ['gv', 402, 842, 990], ['rh', 673, 795, 333], ['rv', 901, 338, 448], ['rv', 1019, 246, 517], ['rh', 797, 1019, 514], ['rv', 801, 514, 553], ['rh', 85, 120, 331], ['gv', 88, 327, 439], ['rv', 224, 338, 427],
    ['gv', 174, 370, 475], ['gv', 179, 673, 815], ['rv', 145, 717, 770], ['rh', 225, 460, 783], ['gv', 652, 563, 625], ['via', 385, 48], ['via', 388, 499], ['via', 397, 842], ['via', 673, 333], ['via', 325, 457], ['via', 901, 448], ['via', 85, 327], ['via', 91, 439], ['via', 169, 370], ['via', 337, 898], ['via', 652, 563], ['via', 994, 751], ['rh', 994, 1162, 745]]) +
  at(960, 420, [['rv', 502, 340, 451], ['gv', 628, 244, 517], ['rv', 132, 520, 612], ['gv', 92, 559, 686], ['via', 502, 451], ['via', 628, 244], ['via', 628, 517], ['via', 133, 517], ['via', 91, 559]]) +
  at(720, 580, [['gv', 398, 0, 493], ['gv', 400, 493, 620], ['gv', 402, 614, 704], ['gv', 183, 0, 85], ['gv', 181, 85, 215], ['gv', 183, 418, 590], ['rh', 118, 602, 173], ['rv', 118, 173, 200], ['gv', 691, 142, 205], ['gv', 441, 278, 365], ['rh', 445, 500, 367], ['gv', 429, 562, 766], ['rh', 425, 500, 776], ['gv', 675, 553, 610], ['rv', 121, 765, 845], ['rv', 583, 775, 857], ['gv', 336, 810, 877],
    ['via', 400, 85], ['via', 400, 493], ['via', 397, 614], ['via', 397, 704], ['via', 184, 85], ['via', 181, 418], ['via', 691, 142], ['via', 442, 278], ['via', 442, 365], ['via', 427, 562], ['via', 430, 766], ['via', 673, 553], ['via', 337, 877]]) +
  at(960, 640, [['gv', 34, 313, 436], ['via', 34, 313], ['gv', 747, 94, 280], ['via', 745, 94], ['via', 745, 280], ['via', 79, 286], ['gv', 75, 286, 355], ['via', 70, 355], ['rv', 625, 190, 256], ['via', 619, 256], ['rv', 511, 600, 700], ['via', 352, 145], ['via', 292, 556]]) +
  '<path d="M732 825.500h16M740.500 817v16" stroke="#fff"/>';
```
